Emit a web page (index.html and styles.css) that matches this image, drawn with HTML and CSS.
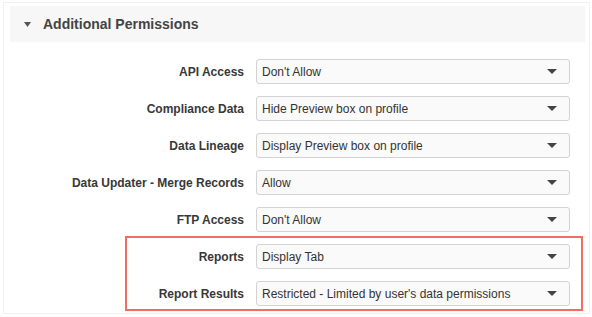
FILE: index.html
```html
<!DOCTYPE html>
<html lang="en">
  <head>
    <meta charset="utf-8" />
    <title>Additional Permissions</title>
    <link rel="stylesheet" href="styles.css">
  </head>
  <body>
    <section class="panel">
      <header class="panel-head">
        <svg class="toggle" width="7" height="5" viewBox="0 0 7 5"><path d="M0 0h7L3.5 5z" fill="#555"/></svg>
        <h2>Additional Permissions</h2>
      </header>

      <div class="panel-body">
        <div class="row">
          <label>API Access</label>
          <div class="select"><span>Don't Allow</span><i class="caret"></i></div>
        </div>
        <div class="row">
          <label>Compliance Data</label>
          <div class="select"><span>Hide Preview box on profile</span><i class="caret"></i></div>
        </div>
        <div class="row">
          <label>Data Lineage</label>
          <div class="select"><span>Display Preview box on profile</span><i class="caret"></i></div>
        </div>
        <div class="row">
          <label>Data Updater - Merge Records</label>
          <div class="select"><span>Allow</span><i class="caret"></i></div>
        </div>
        <div class="row">
          <label>FTP Access</label>
          <div class="select"><span>Don't Allow</span><i class="caret"></i></div>
        </div>
        <div class="row">
          <label>Reports</label>
          <div class="select"><span>Display Tab</span><i class="caret"></i></div>
        </div>
        <div class="row">
          <label>Report Results</label>
          <div class="select"><span>Restricted - Limited by user's data permissions</span><i class="caret"></i></div>
        </div>
      </div>

      <!-- annotation box round the last two rows -->
      <div class="highlight"></div>
    </section>
  </body>
</html>
```

FILE: styles.css
```css
html {
  font-family: "Liberation Sans", Arial, sans-serif;
  font-size: 12px;
  color: #333;
}

body {
  margin: 0;
  background: white;
}

.panel {
  position: relative;
  box-sizing: border-box;
  width: 587px;
  height: 312px;
  margin: 2px 0 0 3px;
  padding: 3px 4px 0 6px;
  border: 1px solid #f1f1f1;
}

.panel-head {
  display: flex;
  align-items: center;
  height: 36px;
  padding-left: 14px;
  background-color: #f7f7f7;
}

.toggle {
  margin-right: 12px;
}

.panel-head h2 {
  margin: 0;
  font-size: 14px;
  font-weight: bold;
  color: #444;
}

.panel-body {
  padding-top: 17px;
  display: flex;
  flex-direction: column;
  gap: 12px;
}

.row {
  display: flex;
  align-items: center;
}

.row label {
  width: 234px;
  margin-right: 12px;
  text-align: right;
  font-weight: bold;
  color: #383838;
}

.select {
  box-sizing: border-box;
  display: flex;
  align-items: center;
  justify-content: space-between;
  width: 314px;
  height: 25px;
  padding: 0 12px 0 5px;
  border: 1px solid #d3d3d3;
  border-radius: 3px;
  background-color: #fafafa;
  color: #333;
}

.caret {
  width: 0;
  height: 0;
  border-left: 5px solid transparent;
  border-right: 5px solid transparent;
  border-top: 5px solid #444;
}

.highlight {
  position: absolute;
  left: 121px;
  top: 233px;
  width: 454px;
  height: 71px;
  border: 2px solid #f36d64;
}
```
